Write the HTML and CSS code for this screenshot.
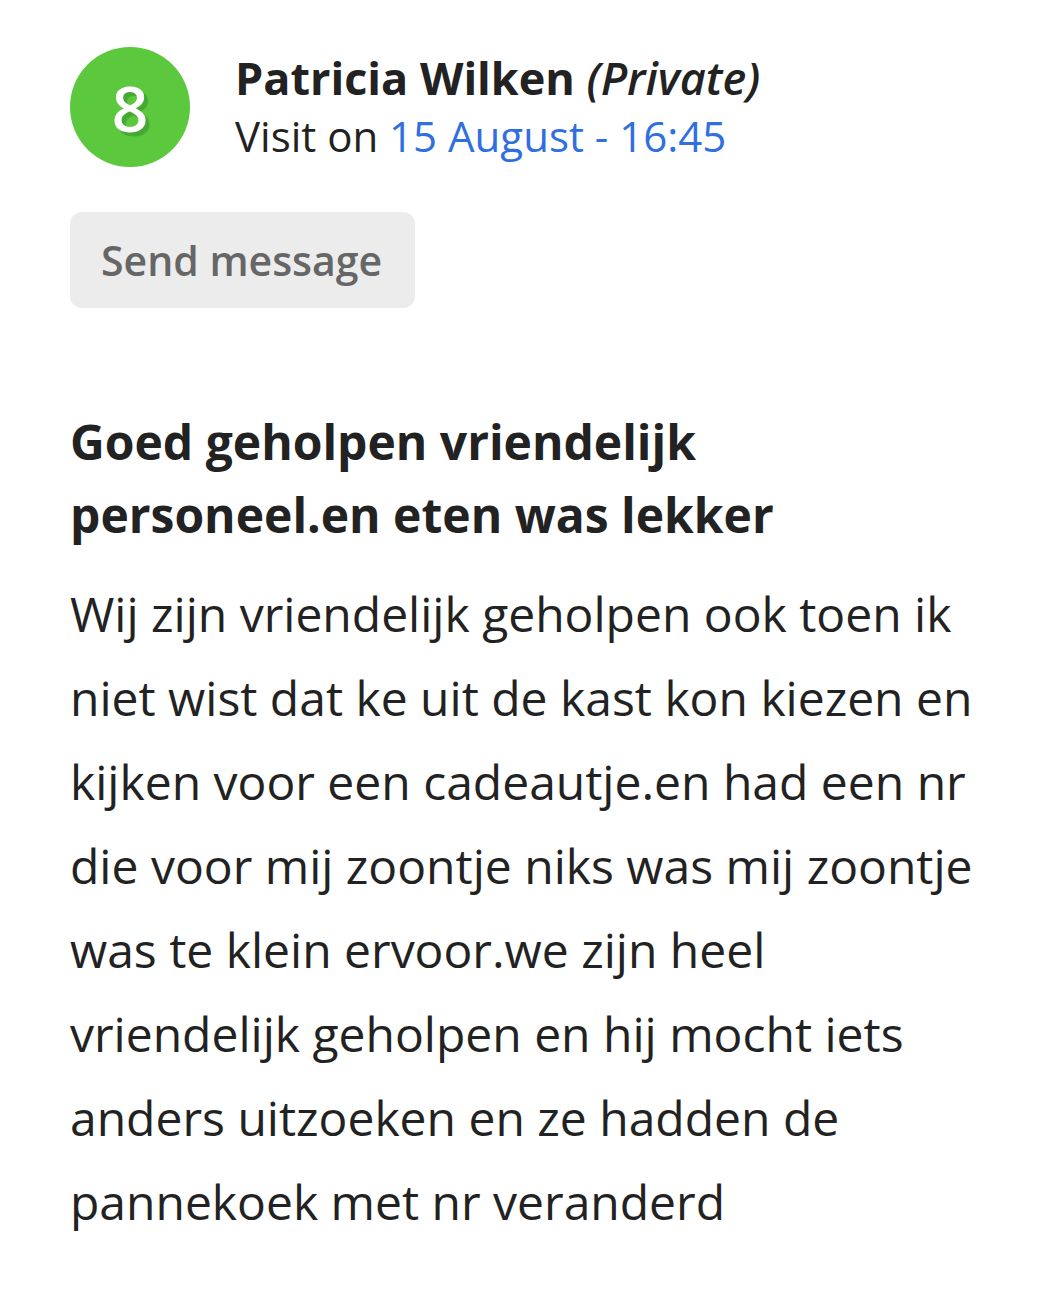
FILE: index.html
```html
<!DOCTYPE html>
<html lang="en">
<head>
    <meta charset="UTF-8">
    <meta name="viewport" content="width=device-width, initial-scale=1.0">
    <title>Review</title>
    <link rel="stylesheet" href="styles.css">
</head>
<body>
    <div class="review">
        <div class="review-header">
            <div class="score">8</div>
            <div class="reviewer">
                <div class="name">Patricia Wilken <em>(Private)</em></div>
                <div class="visit">Visit on <span class="date">15 August - 16:45</span></div>
            </div>
        </div>

        <button class="message-btn">Send message</button>

        <h2 class="review-title">Goed geholpen vriendelijk personeel.en eten was lekker</h2>
        <p class="review-text">Wij zijn vriendelijk geholpen ook toen ik niet wist dat ke uit de kast kon kiezen en kijken voor een cadeautje.en had een nr die voor mij zoontje niks was mij zoontje was te klein ervoor.we zijn heel vriendelijk geholpen en hij mocht iets anders uitzoeken en ze hadden de pannekoek met nr veranderd</p>
    </div>
</body>
</html>
```

FILE: styles.css
```css
body {
    font-family: "Open Sans", sans-serif;
    background-color: #ffffff;
    color: #222222;
    margin: 0;
    padding: 0;
}
.review {
    padding: 47px 66px 40px 70px;
}
.review-header {
    display: flex;
    align-items: center;
    gap: 45px;
}
.score {
    width: 120px;
    height: 120px;
    border-radius: 50%;
    background-color: #5bc83d;
    color: white;
    font-size: 64px;
    font-weight: 600;
    display: flex;
    align-items: center;
    justify-content: center;
    text-shadow: 4px 4px 1px #46a834;
    flex-shrink: 0;
}
.name {
    font-size: 45px;
    font-weight: bold;
    line-height: 58px;
}
.name em {
    font-weight: 600;
}
.visit {
    font-size: 42px;
    line-height: 58px;
}
.date {
    color: #2f6fe0;
}
.message-btn {
    display: block;
    margin-top: 45px;
    font-family: "Open Sans", sans-serif;
    font-size: 41px;
    font-weight: 600;
    color: #666666;
    background-color: #ececec;
    border: none;
    border-radius: 12px;
    padding: 20px 33px 20px 31px;
}
.review-title {
    font-size: 48px;
    font-weight: bold;
    line-height: 73px;
    margin: 97px 0 0 0;
}
.review-text {
    font-size: 48px;
    line-height: 84px;
    margin: 21px 0 0 0;
}
```
